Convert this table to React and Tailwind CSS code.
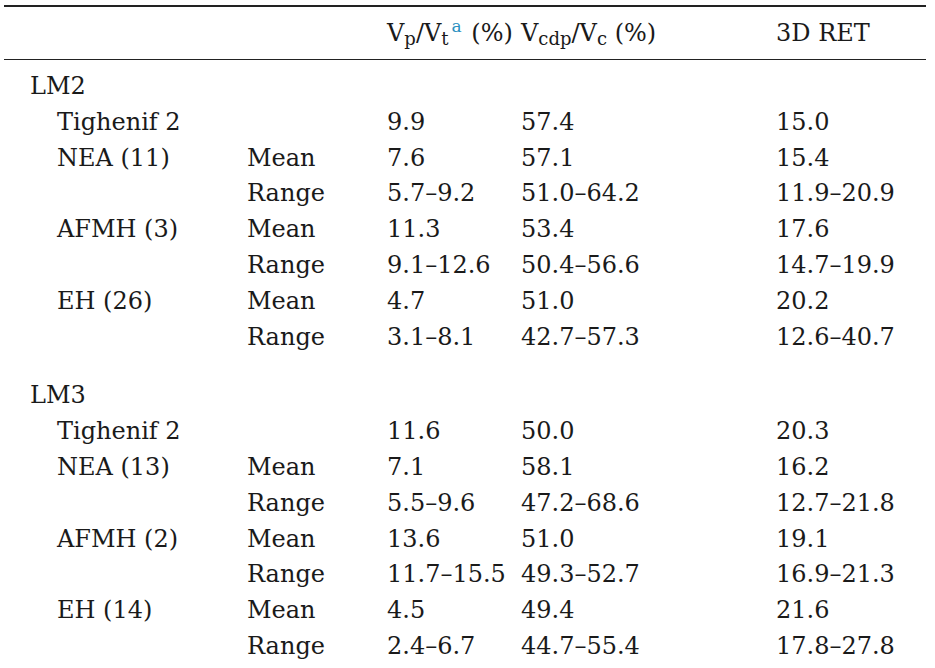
const groups = [
  {
    name: 'LM2',
    rows: [
      { label: 'Tighenif 2', stat: '', a: '9.9', b: '57.4', c: '15.0' },
      { label: 'NEA (11)', stat: 'Mean', a: '7.6', b: '57.1', c: '15.4' },
      { label: '', stat: 'Range', a: '5.7–9.2', b: '51.0–64.2', c: '11.9–20.9' },
      { label: 'AFMH (3)', stat: 'Mean', a: '11.3', b: '53.4', c: '17.6' },
      { label: '', stat: 'Range', a: '9.1–12.6', b: '50.4–56.6', c: '14.7–19.9' },
      { label: 'EH (26)', stat: 'Mean', a: '4.7', b: '51.0', c: '20.2' },
      { label: '', stat: 'Range', a: '3.1–8.1', b: '42.7–57.3', c: '12.6–40.7' },
    ],
  },
  {
    name: 'LM3',
    rows: [
      { label: 'Tighenif 2', stat: '', a: '11.6', b: '50.0', c: '20.3' },
      { label: 'NEA (13)', stat: 'Mean', a: '7.1', b: '58.1', c: '16.2' },
      { label: '', stat: 'Range', a: '5.5–9.6', b: '47.2–68.6', c: '12.7–21.8' },
      { label: 'AFMH (2)', stat: 'Mean', a: '13.6', b: '51.0', c: '19.1' },
      { label: '', stat: 'Range', a: '11.7–15.5', b: '49.3–52.7', c: '16.9–21.3' },
      { label: 'EH (14)', stat: 'Mean', a: '4.5', b: '49.4', c: '21.6' },
      { label: '', stat: 'Range', a: '2.4–6.7', b: '44.7–55.4', c: '17.8–27.8' },
    ],
  },
]

const grid = 'grid grid-cols-[243px_140px_134px_255px_1fr] h-[35.8px] items-center whitespace-nowrap'

function Sub({ children }) {
  return <sub className="text-[18px] relative top-[4px] align-baseline">{children}</sub>
}

export default function App() {
  return (
    <div className="w-[935px] h-[668px] bg-white text-[#1a1a1a] text-[24px] leading-[35.8px]" style={{ fontFamily: '"DejaVu Serif", serif' }}>
      <div className="ml-[4px] w-[922px] pt-[5px]">
        <div className="border-t-2 border-[#222]" />
        <div className={`${grid} h-[52px] pt-[2px]`}>
          <div />
          <div />
          <div>
            V<Sub>p</Sub>/V<Sub>t</Sub>
            <sup className="text-[17px] text-[#2a8fc0] ml-[3px] mr-[2px] relative -top-[9px] align-baseline">a</sup> (%)
          </div>
          <div>
            V<Sub>cdp</Sub>/V<Sub>c</Sub> (%)
          </div>
          <div>3D RET</div>
        </div>
        <div className="border-t border-[#222]" />

        {groups.map((g, gi) => (
          <div key={g.name} className={gi === 0 ? 'pt-[9px]' : 'pt-[23px]'}>
            <div className={grid}>
              <div className="pl-[26px]">{g.name}</div>
            </div>
            {g.rows.map((r, i) => (
              <div key={i} className={grid}>
                <div className="pl-[53px]">{r.label}</div>
                <div>{r.stat}</div>
                <div>{r.a}</div>
                <div>{r.b}</div>
                <div>{r.c}</div>
              </div>
            ))}
          </div>
        ))}
      </div>
    </div>
  )
}
